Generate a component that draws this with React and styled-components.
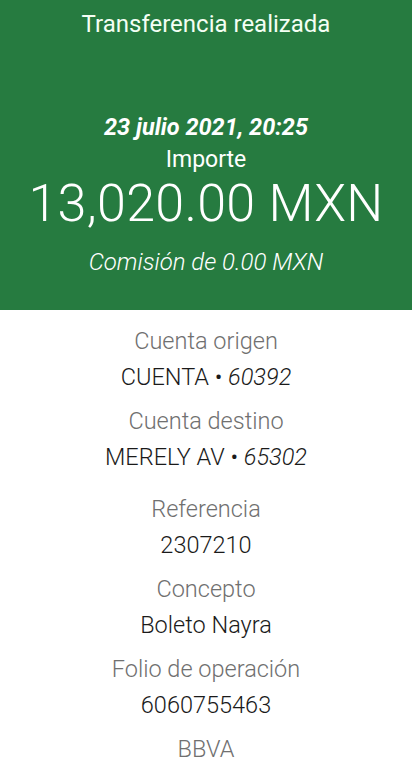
import React from "react";
import styled, { createGlobalStyle } from "styled-components";

const GlobalStyle = createGlobalStyle`
  body {
    margin: 0;
    background: #ffffff;
    font-family: Roboto, "Liberation Sans", sans-serif;
  }
`;

const Page = styled.div`
  width: 412px;
  min-height: 770px;
  display: flex;
  flex-direction: column;
  background: #ffffff;
`;

const Header = styled.div`
  height: 310px;
  box-sizing: border-box;
  background: #267b40;
  color: #ffffff;
  display: flex;
  flex-direction: column;
  align-items: center;
  text-align: center;
`;

const Title = styled.div`
  font-size: 24px;
  font-weight: 400;
  line-height: 48px;
  color: #f4fff4;
`;

const DateLine = styled.div`
  margin-top: 64px;
  font-size: 23.5px;
  font-weight: 700;
  font-style: italic;
  line-height: 30px;
`;

const AmountLabel = styled.div`
  margin-top: 5px;
  font-size: 23px;
  font-weight: 400;
  line-height: 26px;
`;

const Amount = styled.div`
  margin-top: 2px;
  font-size: 52px;
  font-weight: 300;
  line-height: 58px;
  letter-spacing: 0.3px;
`;

const Fee = styled.div`
  margin-top: 14px;
  font-size: 24px;
  font-weight: 300;
  font-style: italic;
  line-height: 30px;
`;

const Details = styled.div`
  display: flex;
  flex-direction: column;
  align-items: center;
  padding-top: 16px;
  text-align: center;
`;

const Field = styled.div`
  display: flex;
  flex-direction: column;
  align-items: center;
  gap: 6px;
  margin-bottom: ${(p) => (p.$wide ? 22 : 14)}px;
`;

const Label = styled.div`
  font-size: 23.5px;
  font-weight: 300;
  line-height: 30px;
  color: #707070;
`;

const Value = styled.div`
  font-size: 23.5px;
  font-weight: 300;
  line-height: 30px;
  color: #1a1a1a;

  em {
    font-style: italic;
  }
`;

const fields = [
  { label: "Cuenta origen", value: "CUENTA • ", num: "60392" },
  { label: "Cuenta destino", value: "MERELY AV • ", num: "65302", wide: true },
  { label: "Referencia", value: "2307210" },
  { label: "Concepto", value: "Boleto Nayra" },
  { label: "Folio de operación", value: "6060755463" },
];

const App = () => {
  return (
    <>
      <GlobalStyle />
      <Page>
        <Header>
          <Title>Transferencia realizada</Title>
          <DateLine>23 julio 2021, 20:25</DateLine>
          <AmountLabel>Importe</AmountLabel>
          <Amount>13,020.00 MXN</Amount>
          <Fee>Comisión de 0.00 MXN</Fee>
        </Header>
        <Details>
          {fields.map((f) => (
            <Field key={f.label} $wide={f.wide}>
              <Label>{f.label}</Label>
              <Value>
                {f.value}
                {f.num && <em>{f.num}</em>}
              </Value>
            </Field>
          ))}
          <Label>BBVA</Label>
        </Details>
      </Page>
    </>
  );
};

export default App;
